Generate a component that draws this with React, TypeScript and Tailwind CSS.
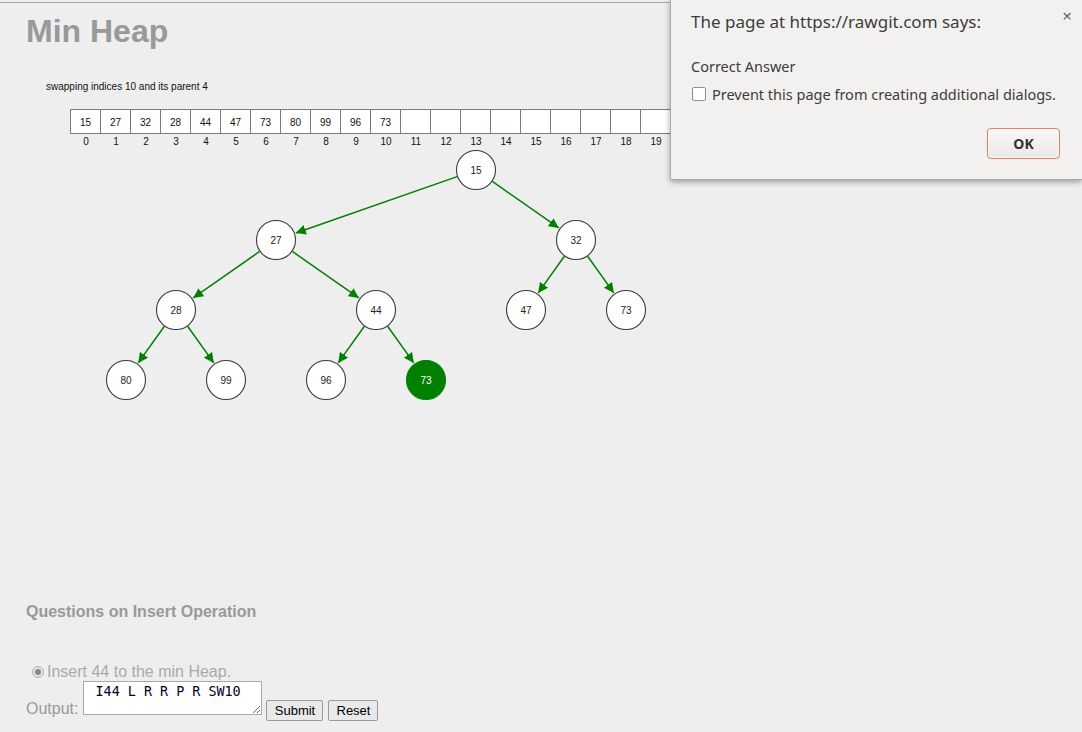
import React from "react";

const nodes: { v: string; x: number; y: number; hl?: boolean }[] = [
  { v: "15", x: 476, y: 170 },
  { v: "27", x: 276, y: 240 },
  { v: "32", x: 576, y: 240 },
  { v: "28", x: 176, y: 310 },
  { v: "44", x: 376, y: 310 },
  { v: "47", x: 526, y: 310 },
  { v: "73", x: 626, y: 310 },
  { v: "80", x: 126, y: 380 },
  { v: "99", x: 226, y: 380 },
  { v: "96", x: 326, y: 380 },
  { v: "73", x: 426, y: 380, hl: true },
];

const edges: [number, number][] = [
  [0, 1], [0, 2], [1, 3], [1, 4], [2, 5], [2, 6], [3, 7], [3, 8], [4, 9], [4, 10],
];

const arr = ["15", "27", "32", "28", "44", "47", "73", "80", "99", "96", "73"];
const TOP = 148;
const R = 20;

function Tree() {
  return (
    <svg width={1082} height={455} className="block">
      <defs>
        <marker id="ah" viewBox="0 0 10 10" refX="10" refY="5" markerWidth="10" markerHeight="10" markerUnits="userSpaceOnUse" orient="auto">
          <path d="M0,0 L10,5 L0,10 z" fill="#008000" />
        </marker>
      </defs>
      {edges.map(([a, b], i) => {
        const p = nodes[a];
        const c = nodes[b];
        const dx = c.x - p.x;
        const dy = c.y - p.y;
        const L = Math.hypot(dx, dy);
        const ux = dx / L;
        const uy = dy / L;
        return (
          <line
            key={i}
            x1={p.x + ux * R}
            y1={p.y - TOP + uy * R}
            x2={c.x - ux * (R + 1)}
            y2={c.y - TOP - uy * (R + 1)}
            stroke="#008000"
            strokeWidth={1.5}
            markerEnd="url(#ah)"
          />
        );
      })}
      {nodes.map((n, i) => (
        <g key={i}>
          <circle
            cx={n.x}
            cy={n.y - TOP}
            r={19.5}
            fill={n.hl ? "#008000" : "#ffffff"}
            stroke={n.hl ? "#008000" : "#3a3a3a"}
            strokeWidth={1.1}
          />
          <text
            x={n.x}
            y={n.y - TOP + 3.5}
            textAnchor="middle"
            fontSize={10}
            fontFamily="'Liberation Sans', Arial, sans-serif"
            fill={n.hl ? "#ffffff" : "#222222"}
          >
            {n.v}
          </text>
        </g>
      ))}
    </svg>
  );
}

export default function App() {
  return (
    <div className="relative w-[1082px] h-[732px] overflow-hidden bg-[#eeeeee] font-['Liberation_Sans',Arial,sans-serif]">
      <div className="mt-[2px] border-t border-[#a8a8a8]">
        <h1 className="ml-[26px] mt-[12px] text-[32px] leading-[32px] font-bold text-[#999999]">Min Heap</h1>
        <div className="ml-[46px] mt-[34px] text-[10px] leading-[12px] text-[#111111]">swapping indices 10 and its parent 4</div>
        <div className="ml-[70px] mt-[16px] flex">
          {Array.from({ length: 20 }).map((_, i) => (
            <div
              key={i}
              className={`w-[31px] h-[25px] bg-white border border-[#7a7a7a] ${i === 0 ? "" : "-ml-px"} flex items-center justify-center pt-px text-[10px] text-[#111111]`}
            >
              {arr[i] ?? ""}
            </div>
          ))}
        </div>
        <div className="ml-[71px] mt-[2px] flex">
          {Array.from({ length: 20 }).map((_, i) => (
            <div key={i} className="w-[30px] text-center text-[10px] leading-[12px] text-[#111111]">
              {i}
            </div>
          ))}
        </div>
        <Tree />
        <h2 className="ml-[26px] text-[16px] leading-[18px] font-bold text-[#999999]">Questions on Insert Operation</h2>
        <div className="ml-[32px] mt-[42px] flex items-center h-[18px]">
          <span className="w-[12px] h-[12px] rounded-full border border-[#b5b5b5] bg-[#e4e4e4] flex items-center justify-center">
            <span className="w-[6px] h-[6px] rounded-full bg-[#8a8a8a]" />
          </span>
          <span className="ml-[3px] text-[16px] leading-[18px] text-[#aaaaaa]">Insert 44 to the min Heap.</span>
        </div>
        <div className="ml-[26px] flex items-end">
          <span className="text-[16px] leading-[18px] text-[#999999] mb-[-3px] mr-[5px]">Output:</span>
          <textarea
            readOnly
            value=" I44 L R R P R SW10"
            className="w-[179px] h-[34px] bg-white border border-[#a9a9a9] px-[3px] py-[2px] text-[13.4px] leading-[15px] text-[#000022] font-['DejaVu_Sans_Mono',monospace] resize-y outline-none"
          />
          <button className="ml-[4px] mb-[-6px] w-[57px] h-[21px] rounded-[2px] border border-[#9a9a9a] bg-[#e9e9e9] text-[13px] text-black">Submit</button>
          <button className="ml-[5px] mb-[-6px] w-[50px] h-[21px] rounded-[2px] border border-[#9a9a9a] bg-[#e9e9e9] text-[13px] text-black">Reset</button>
        </div>
      </div>

      <div className="absolute left-[670px] top-0 w-[412px] h-[180px] bg-[#f2f1f0] border-l border-b border-[#a9a9a9] shadow-[0_2px_6px_rgba(0,0,0,0.35)] font-['Noto_Sans',sans-serif] text-[#3c3c3c]">
        <div className="absolute right-[10px] top-[3px] text-[17px] text-[#666666]">×</div>
        <div className="ml-[20px] mt-[9px] text-[17px] leading-[26px]">The page at https://rawgit.com says:</div>
        <div className="ml-[20px] mt-[21px] text-[14.5px] leading-[20px]">Correct Answer</div>
        <div className="ml-[21px] mt-[8px] flex items-center">
          <span className="w-[14px] h-[14px] rounded-[2px] border border-[#8f8f8f] bg-white" />
          <span className="ml-[6px] text-[14.5px] leading-[20px]">Prevent this page from creating additional dialogs.</span>
        </div>
        <div className="flex justify-end mr-[22px] mt-[24px]">
          <button className="w-[73px] h-[31px] rounded-[4px] border border-[#e4805d] bg-[linear-gradient(#f8f7f6,#ebe9e7)] text-[14px] font-bold text-[#333333] shadow-[inset_0_0_0_1px_rgba(255,255,255,0.6)]">OK</button>
        </div>
      </div>
    </div>
  );
}
